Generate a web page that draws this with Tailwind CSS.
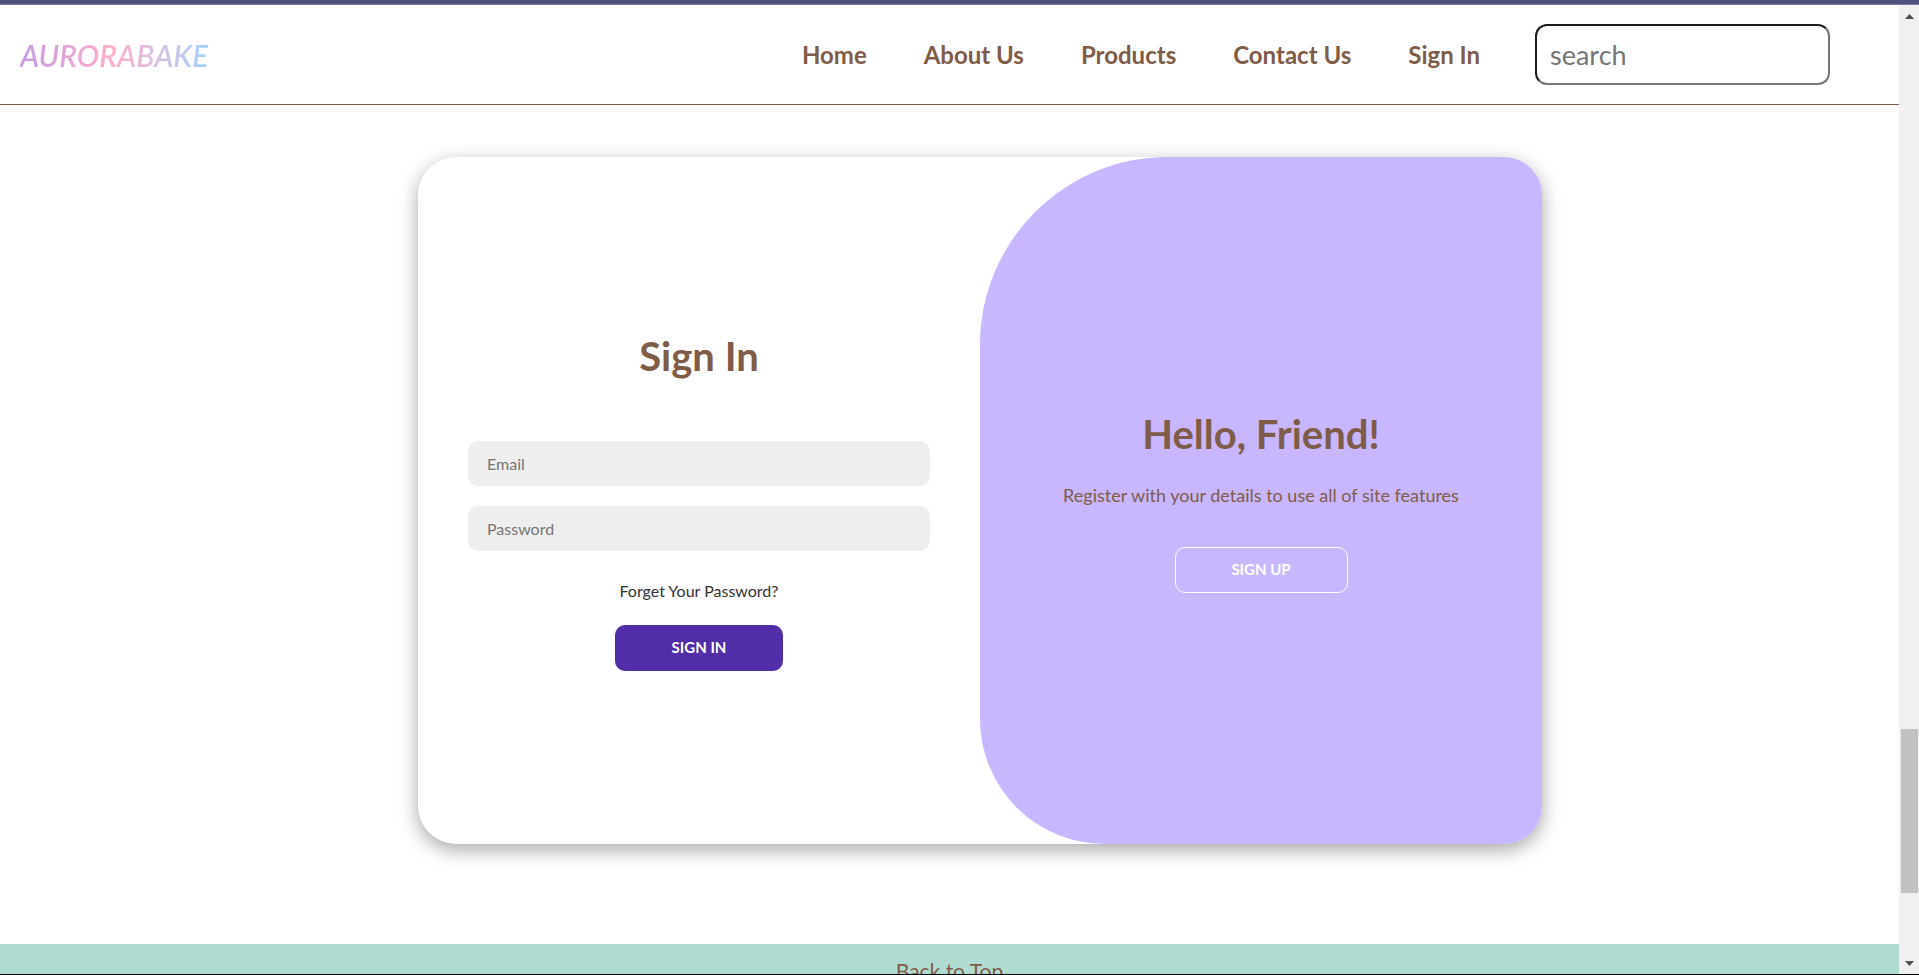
<!DOCTYPE html>
<html lang="en">
<head>
<meta charset="utf-8">
<meta name="viewport" content="width=device-width, initial-scale=1">
<title>Aurorabake - Sign In</title>
<script src="https://cdn.jsdelivr.net/npm/@tailwindcss/browser@4"></script>
</head>
<body class="flex h-screen flex-col overflow-hidden border-b border-black bg-white font-['Lato','Open_Sans',sans-serif] text-[#7f5c47]">
  <div class="h-[5px] shrink-0 border-b border-[#7879a5] bg-[#4f507c]"></div>
  <div class="flex min-h-0 flex-1">
    <div class="flex min-w-0 flex-1 flex-col overflow-hidden">
      <header class="flex h-[100px] shrink-0 items-center justify-between border-b border-[#7f5c47] pr-[69px] pl-5">
        <a href="#" class="bg-linear-to-r from-[#c79be3] via-[#ffadc9] to-[#9fd0ff] bg-clip-text text-[30px] leading-10 font-semibold text-transparent italic">AURORABAKE</a>
        <div class="flex items-center gap-[55px]">
          <nav class="flex items-center gap-[57px] text-[24px] font-bold whitespace-nowrap">
            <a href="#">Home</a>
            <a href="#">About Us</a>
            <a href="#">Products</a>
            <a href="#">Contact Us</a>
            <a href="#">Sign In</a>
          </nav>
          <input type="search" aria-label="Search" placeholder="search" class="h-[61px] w-[295px] rounded-xl border-2 border-t-[#1c1c1c] border-r-[#767676] border-b-[#767676] border-l-[#1c1c1c] px-[13px] text-[27px] placeholder:text-[#757575]">
        </div>
      </header>
      <main class="shrink-0 pt-[52px] pb-[100px] pl-[61px]">
        <div class="mx-auto grid min-h-[687px] w-full max-w-[1124px] grid-cols-2 overflow-hidden rounded-[38px] bg-white shadow-[0_6px_19px_rgba(0,0,0,0.35)]">
          <form class="flex flex-col items-center justify-center px-[50px]">
            <h1 class="mb-[60px] text-[40px] leading-[50px] font-bold">Sign In</h1>
            <input type="email" aria-label="Email" placeholder="Email" class="mb-5 h-[45px] w-full rounded-[10px] bg-[#eeeeee] px-[19px] text-base placeholder:text-[#757575]">
            <input type="password" aria-label="Password" placeholder="Password" class="mb-7 h-[45px] w-full rounded-[10px] bg-[#eeeeee] px-[19px] text-base placeholder:text-[#757575]">
            <a href="#" class="mb-[22px] text-base leading-6 text-[#333333]">Forget Your Password?</a>
            <button type="button" class="h-[46px] w-[168px] rounded-[10px] bg-[#512da8] text-[15px] font-bold text-white">SIGN IN</button>
          </form>
          <section class="flex flex-col items-center justify-center rounded-tl-[188px] rounded-bl-[125px] bg-[#c8b6ff] px-[38px]">
            <h2 class="mb-6 text-[40px] leading-[50px] font-bold">Hello, Friend!</h2>
            <p class="mb-[40px] text-lg leading-6">Register with your details to use all of site features</p>
            <button type="button" class="h-[46px] w-[173px] rounded-[10px] border border-white text-[15px] font-bold text-white">SIGN UP</button>
          </section>
        </div>
      </main>
      <footer class="flex shrink-0 justify-center bg-[#b0dbd0] py-3">
        <a href="#" class="text-[21px] leading-[30px]">Back to Top</a>
      </footer>
    </div>
    <div class="flex w-5 shrink-0 flex-col items-center justify-between bg-[#f0f0f0] pt-[9px] pb-2" aria-hidden="true">
      <svg class="h-[5px] w-[9px] fill-[#505050]" viewBox="0 0 9 5"><path d="M0 5 4.500 0 9 5Z"/></svg>
      <div class="flex w-full flex-1 flex-col px-px">
        <div class="grow-[709]"></div>
        <div class="ml-px grow-[164] bg-[#c1c1c1]"></div>
        <div class="grow-[68]"></div>
      </div>
      <svg class="h-[5px] w-[9px] fill-[#505050]" viewBox="0 0 9 5"><path d="M0 0H9L4.500 5Z"/></svg>
    </div>
  </div>
</body>
</html>
